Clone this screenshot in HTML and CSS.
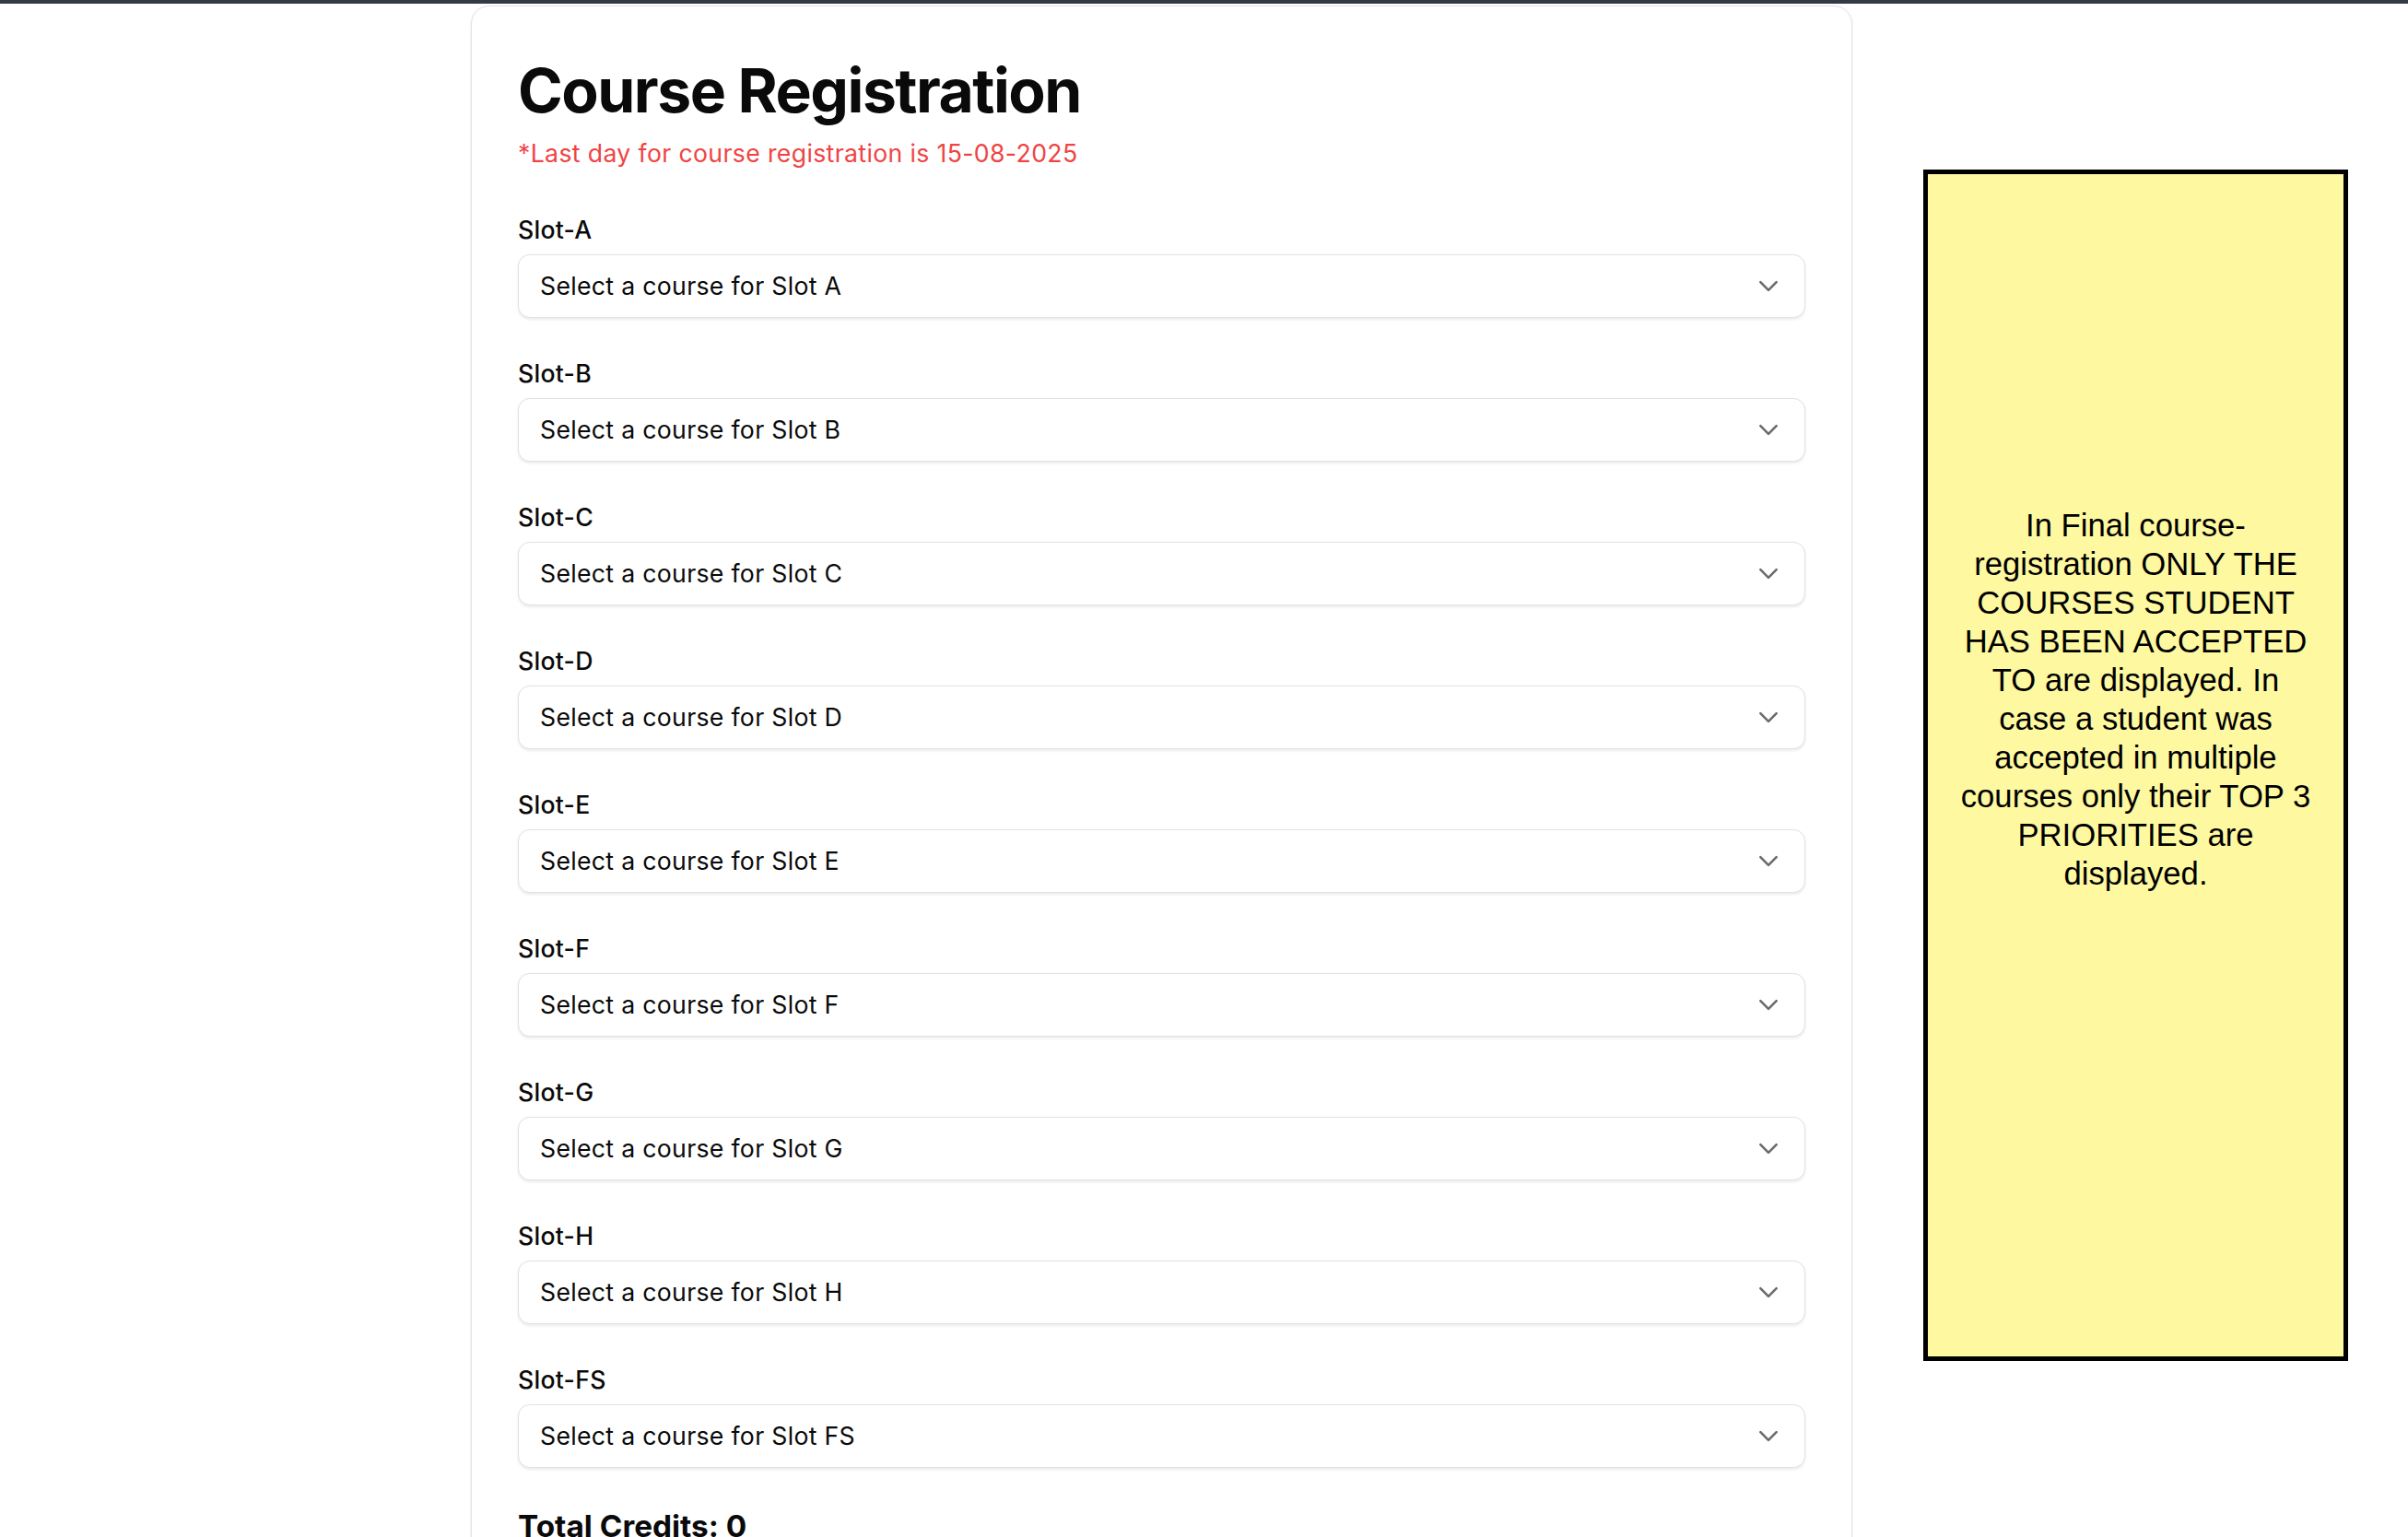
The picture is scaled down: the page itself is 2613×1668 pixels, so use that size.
FILE: index.html
```html
<!DOCTYPE html>
<html lang="en">
<head>
<meta charset="utf-8">
<title>Course Registration</title>
<link rel="stylesheet" href="styles.css">
</head>
<body>
<div class="topbar"></div>
<div class="layout">
  <main class="card">
    <h1 class="title">Course Registration</h1>
    <p class="deadline">*Last day for course registration is 15-08-2025</p>

    <div class="field">
      <label class="field-label">Slot-A</label>
      <div class="select-wrap">
        <select class="select"><option>Select a course for Slot A</option></select>
        <svg class="chev" viewBox="0 0 20 12" fill="none" stroke="currentColor" stroke-width="2.4" stroke-linecap="round" stroke-linejoin="round"><path d="M2 2l8 8 8-8"/></svg>
      </div>
    </div>
    <div class="field">
      <label class="field-label">Slot-B</label>
      <div class="select-wrap">
        <select class="select"><option>Select a course for Slot B</option></select>
        <svg class="chev" viewBox="0 0 20 12" fill="none" stroke="currentColor" stroke-width="2.4" stroke-linecap="round" stroke-linejoin="round"><path d="M2 2l8 8 8-8"/></svg>
      </div>
    </div>
    <div class="field">
      <label class="field-label">Slot-C</label>
      <div class="select-wrap">
        <select class="select"><option>Select a course for Slot C</option></select>
        <svg class="chev" viewBox="0 0 20 12" fill="none" stroke="currentColor" stroke-width="2.4" stroke-linecap="round" stroke-linejoin="round"><path d="M2 2l8 8 8-8"/></svg>
      </div>
    </div>
    <div class="field">
      <label class="field-label">Slot-D</label>
      <div class="select-wrap">
        <select class="select"><option>Select a course for Slot D</option></select>
        <svg class="chev" viewBox="0 0 20 12" fill="none" stroke="currentColor" stroke-width="2.4" stroke-linecap="round" stroke-linejoin="round"><path d="M2 2l8 8 8-8"/></svg>
      </div>
    </div>
    <div class="field">
      <label class="field-label">Slot-E</label>
      <div class="select-wrap">
        <select class="select"><option>Select a course for Slot E</option></select>
        <svg class="chev" viewBox="0 0 20 12" fill="none" stroke="currentColor" stroke-width="2.4" stroke-linecap="round" stroke-linejoin="round"><path d="M2 2l8 8 8-8"/></svg>
      </div>
    </div>
    <div class="field">
      <label class="field-label">Slot-F</label>
      <div class="select-wrap">
        <select class="select"><option>Select a course for Slot F</option></select>
        <svg class="chev" viewBox="0 0 20 12" fill="none" stroke="currentColor" stroke-width="2.4" stroke-linecap="round" stroke-linejoin="round"><path d="M2 2l8 8 8-8"/></svg>
      </div>
    </div>
    <div class="field">
      <label class="field-label">Slot-G</label>
      <div class="select-wrap">
        <select class="select"><option>Select a course for Slot G</option></select>
        <svg class="chev" viewBox="0 0 20 12" fill="none" stroke="currentColor" stroke-width="2.4" stroke-linecap="round" stroke-linejoin="round"><path d="M2 2l8 8 8-8"/></svg>
      </div>
    </div>
    <div class="field">
      <label class="field-label">Slot-H</label>
      <div class="select-wrap">
        <select class="select"><option>Select a course for Slot H</option></select>
        <svg class="chev" viewBox="0 0 20 12" fill="none" stroke="currentColor" stroke-width="2.4" stroke-linecap="round" stroke-linejoin="round"><path d="M2 2l8 8 8-8"/></svg>
      </div>
    </div>
    <div class="field">
      <label class="field-label">Slot-FS</label>
      <div class="select-wrap">
        <select class="select"><option>Select a course for Slot FS</option></select>
        <svg class="chev" viewBox="0 0 20 12" fill="none" stroke="currentColor" stroke-width="2.4" stroke-linecap="round" stroke-linejoin="round"><path d="M2 2l8 8 8-8"/></svg>
      </div>
    </div>

    <h2 class="total">Total Credits: 0</h2>
  </main>

  <aside class="notice">
    <p class="notice-text">In Final course-registration ONLY THE COURSES STUDENT HAS BEEN ACCEPTED TO are displayed. In case a student was accepted in multiple courses only their TOP 3 PRIORITIES are displayed.</p>
  </aside>
</div>
</body>
</html>
```

FILE: styles.css
```css
* {
  box-sizing: border-box;
}

html, body {
  margin: 0;
  padding: 0;
  background: #ffffff;
}

body {
  font-family: Inter, "Noto Sans", "Liberation Sans", sans-serif;
  color: #0a0a0a;
  overflow: hidden;
  height: 1668px;
}

.topbar {
  height: 4px;
  background: #333a47;
}

.layout {
  display: flex;
  align-items: flex-start;
  padding-left: 511px;
  gap: 77px;
}

.card {
  width: 1499px;
  margin-top: 2px;
  padding: 51px 50px 40px;
  border: 1px solid #e3e3e3;
  border-radius: 20px;
  box-shadow: 0 1px 3px rgba(0, 0, 0, 0.08);
  background: #fff;
}

.title {
  margin: 0;
  font-size: 66px;
  line-height: 80px;
  font-weight: 700;
  letter-spacing: -0.023em;
  color: #0a0a0a;
}

.deadline {
  margin: 8px 0 43px;
  font-size: 26.67px;
  line-height: 40px;
  letter-spacing: 0.34px;
  color: #ef4444;
}

.field {
  margin-bottom: 40px;
}

.field-label {
  display: block;
  margin-bottom: 6.67px;
  font-size: 26.67px;
  line-height: 40px;
  font-weight: 500;
  letter-spacing: 0.25px;
  color: #0a0a0a;
}

.select-wrap {
  position: relative;
}

.select {
  display: block;
  width: 100%;
  height: 69.33px;
  padding: 0 60px 0 23px;
  font-family: inherit;
  font-size: 26.67px;
  letter-spacing: 0.3px;
  color: #0a0a0a;
  background: #fff;
  border: 1px solid #e2e2e2;
  border-radius: 13px;
  box-shadow: 0 1.5px 3px rgba(0, 0, 0, 0.08);
  appearance: none;
  -webkit-appearance: none;
  outline: none;
}

.chev {
  position: absolute;
  right: 29px;
  top: 50%;
  width: 22px;
  height: 13px;
  margin-top: -6px;
  color: #6b6b6b;
  pointer-events: none;
}

.total {
  margin: 17px 0 0;
  font-size: 33.33px;
  line-height: 46.67px;
  font-weight: 700;
  color: #0a0a0a;
}

.notice {
  width: 461px;
  height: 1293px;
  margin-top: 180px;
  border: 5px solid #000;
  background: #fef8a0;
}

.notice-text {
  margin: 0;
  padding: 360px 30px 0;
  font-family: "Liberation Sans", Arial, Helvetica, sans-serif;
  font-size: 34.67px;
  line-height: 42px;
  text-align: center;
  color: #000;
}
```
